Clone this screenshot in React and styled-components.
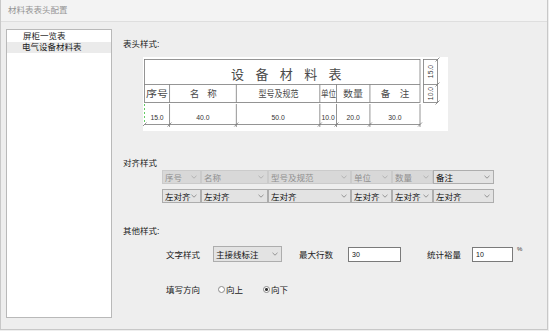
import styled, { createGlobalStyle } from "styled-components";

const Global = createGlobalStyle`
  html, body { margin: 0; padding: 0; background: #eeeeee; }
  body { font-family: "Liberation Sans", "Noto Sans CJK SC", sans-serif; }
`;

const Frame = styled.div`
  width: 548px;
  height: 330px;
  box-sizing: border-box;
  border: 1px solid #c8c8c8;
  border-top: none;
  background: #eeeeee;
  display: flex;
  flex-direction: column;
`;

const TitleBar = styled.div`
  height: 21px;
  line-height: 21px;
  padding-left: 7px;
  font-size: 8.5px;
  color: #959595;
  background: #f3f3f3;
  border-bottom: 1px solid #dedede;
`;

const Body = styled.div`
  flex: 1;
  display: flex;
  padding: 7px 0 0 5px;
`;

const List = styled.div`
  width: 106px;
  height: 289px;
  box-sizing: border-box;
  background: #fff;
  border: 1px solid #b9b9b9;
  padding-top: 1px;
`;

const ListItem = styled.div`
  height: 11px;
  line-height: 11px;
  font-size: 8.5px;
  color: #1a1a1a;
  padding-left: ${(p) => (p.$selected ? "15px" : "16px")};
  background: ${(p) => (p.$selected ? "#ebebeb" : "transparent")};
`;

const Content = styled.div`
  flex: 1;
  display: flex;
  flex-direction: column;
  padding-left: 11px;
`;

const SectionLabel = styled.div`
  height: 12px;
  line-height: 12px;
  font-size: 8.5px;
  color: #1a1a1a;
  margin-top: ${(p) => p.$top}px;
`;

const Drawing = styled.svg`
  display: block;
  margin: 7px 0 0 20px;
  background: #fff;
`;

const AlignGrid = styled.div`
  display: grid;
  grid-template-columns: 39px 67px 83px 41px 41px 61px;
  row-gap: 5px;
  margin: 1px 0 0 39px;
`;

const Select = styled.div`
  display: flex;
  align-items: center;
  justify-content: space-between;
  height: ${(p) => p.$h || 14}px;
  box-sizing: border-box;
  border: 1px solid ${(p) => (p.$disabled ? "#cbcbcb" : "#adadad")};
  background: ${(p) => (p.$disabled ? "#d8d8d8" : "#e3e3e3")};
  color: ${(p) => (p.$disabled ? "#8f8f8f" : "#111")};
  padding: 0 3px 0 2px;
  font-size: 8.5px;
  white-space: nowrap;
  overflow: hidden;
`;

const OptionsRow = styled.div`
  display: flex;
  align-items: center;
  height: 16px;
  margin: ${(p) => p.$top}px 0 0 43px;
`;

const FieldLabel = styled.span`
  font-size: 8.5px;
  color: #1a1a1a;
  width: ${(p) => p.$w}px;
  white-space: nowrap;
`;

const TextStyleSelect = styled(Select)`
  width: 69px;
  margin-right: 17px;
`;

const Input = styled.div`
  width: ${(p) => p.$w}px;
  height: 15px;
  box-sizing: border-box;
  border: 1px solid #7a7a7a;
  background: #fff;
  font-size: 7px;
  line-height: 13px;
  padding-left: 3px;
  color: #111;
  margin-right: ${(p) => p.$mr}px;
`;

const Percent = styled.span`
  font-size: 6px;
  color: #333;
  align-self: flex-start;
  margin-left: 4px;
`;

const Radio = styled.span`
  display: inline-flex;
  align-items: center;
  font-size: 8.5px;
  color: #1a1a1a;
  margin-right: ${(p) => p.$mr}px;
  &::before {
    content: "";
    width: 5px;
    height: 5px;
    border-radius: 50%;
    border: 1px solid #8a8a8a;
    background: ${(p) =>
      p.$checked ? "radial-gradient(circle, #333 0 1.3px, #fff 1.6px)" : "#fff"};
    margin-right: 1px;
  }
`;

const Chevron = ({ color = "#808080" }) => (
  <svg width="6" height="4" viewBox="0 0 6 4">
    <polyline points="0.5,0.8 3,3.2 5.5,0.8" fill="none" stroke={color} strokeWidth="0.8" />
  </svg>
);

const cols = [
  { w: 15, name: "序号" },
  { w: 40, name: "名称" },
  { w: 50, name: "型号及规范" },
  { w: 10, name: "单位" },
  { w: 20, name: "数量" },
  { w: 30, name: "备注" },
];

const LEFT = 143.5;
const RIGHT = 419;
const unit = (RIGHT - LEFT) / 165;
const edges = cols.reduce((a, c) => [...a, a[a.length - 1] + c.w * unit], [LEFT]);

// header labels of the preview, x = glyph centre, len = drawn width
const headerText = [
  { t: "序号", x: 156, len: 22 },
  { t: "名", x: 193.5 },
  { t: "称", x: 211 },
  { t: "型号及规范", x: 277.5, len: 40 },
  { t: "单位", x: 327.5, len: 15 },
  { t: "数量", x: 352, len: 20 },
  { t: "备", x: 384.5 },
  { t: "注", x: 403.5 },
];

function TableDrawing() {
  const line = "#7a7a7a";
  return (
    <Drawing width="305" height="74" viewBox="142 57 305 74">
      <g stroke={line} strokeWidth="0.8" fill="none">
        <rect x={LEFT} y="59.5" width={RIGHT - LEFT} height="43" />
        <line x1={LEFT} y1="84.5" x2={RIGHT} y2="84.5" />
        {edges.slice(1, -1).map((x, i) => (
          <line key={i} x1={x} y1="84.5" x2={x} y2="102.5" />
        ))}
        <rect x="422.5" y="59.5" width="14" height="43" />
        <line x1="422.5" y1="84.5" x2="436.5" y2="84.5" />
        {[59.5, 84.5, 102.5].map((y) => (
          <line key={y} x1="434.5" y1={y + 2} x2="438.5" y2={y - 2} />
        ))}
        {edges.slice(1).map((x, i) => (
          <line key={"v" + i} x1={x} y1="104" x2={x} y2="127" />
        ))}
        <line x1={LEFT} y1="124.5" x2={RIGHT} y2="124.5" />
        {edges.map((x, i) => (
          <line key={"t" + i} x1={x - 2} y1="126.5" x2={x + 2} y2="122.5" />
        ))}
      </g>
      <line x1={LEFT} y1="104" x2={LEFT} y2="122" stroke="#3cbf3c" strokeWidth="0.8" strokeDasharray="2 2" />
      <g fill="#4a4a4a" fontFamily='"Noto Sans CJK SC", sans-serif' fontSize="13" textAnchor="middle">
        {["设", "备", "材", "料", "表"].map((c, i) => (
          <text key={c} x={236.5 + i * 24.4} y="79">
            {c}
          </text>
        ))}
      </g>
      <g fill="#4a4a4a" fontFamily='"Noto Sans CJK SC", sans-serif' fontSize="9.5" textAnchor="middle">
        {headerText.map((h, i) => (
          <text
            key={i}
            x={h.x}
            y="97"
            textLength={h.len}
            lengthAdjust={h.len ? "spacingAndGlyphs" : undefined}
          >
            {h.t}
          </text>
        ))}
      </g>
      <g fill="#333" fontFamily='"Liberation Sans", sans-serif' fontSize="6.8" textAnchor="middle">
        {cols.map((c, i) => (
          <text key={i} x={(edges[i] + edges[i + 1]) / 2} y="119.5">
            {c.w.toFixed(1)}
          </text>
        ))}
        <text x="432" y="71.5" transform="rotate(-90 432 71.5)">
          15.0
        </text>
        <text x="432" y="93.5" transform="rotate(-90 432 93.5)">
          10.0
        </text>
      </g>
    </Drawing>
  );
}

export default function App() {
  return (
    <>
      <Global />
      <Frame>
        <TitleBar>材料表表头配置</TitleBar>
        <Body>
          <List>
            <ListItem>屏柜一览表</ListItem>
            <ListItem $selected>电气设备材料表</ListItem>
          </List>
          <Content>
            <SectionLabel $top={9}>表头样式:</SectionLabel>
            <TableDrawing />
            <SectionLabel $top={26}>对齐样式</SectionLabel>
            <AlignGrid>
              {cols.map((c, i) => (
                <Select key={c.name} $disabled={i < 5}>
                  <span>{c.name}</span>
                  <Chevron color={i < 5 ? "#a8a8a8" : "#808080"} />
                </Select>
              ))}
              {cols.map((c) => (
                <Select key={"a" + c.name}>
                  <span>左对齐</span>
                  <Chevron />
                </Select>
              ))}
            </AlignGrid>
            <SectionLabel $top={22}>其他样式:</SectionLabel>
            <OptionsRow $top={9}>
              <FieldLabel $w={47}>文字样式</FieldLabel>
              <TextStyleSelect $h={16}>
                <span>主接线标注</span>
                <Chevron />
              </TextStyleSelect>
              <FieldLabel $w={49}>最大行数</FieldLabel>
              <Input $w={53} $mr={26}>30</Input>
              <FieldLabel $w={45}>统计裕量</FieldLabel>
              <Input $w={41} $mr={0}>10</Input>
              <Percent>%</Percent>
            </OptionsRow>
            <OptionsRow $top={19}>
              <FieldLabel $w={52}>填写方向</FieldLabel>
              <Radio $mr={20}>向上</Radio>
              <Radio $checked>向下</Radio>
            </OptionsRow>
          </Content>
        </Body>
      </Frame>
    </>
  );
}
